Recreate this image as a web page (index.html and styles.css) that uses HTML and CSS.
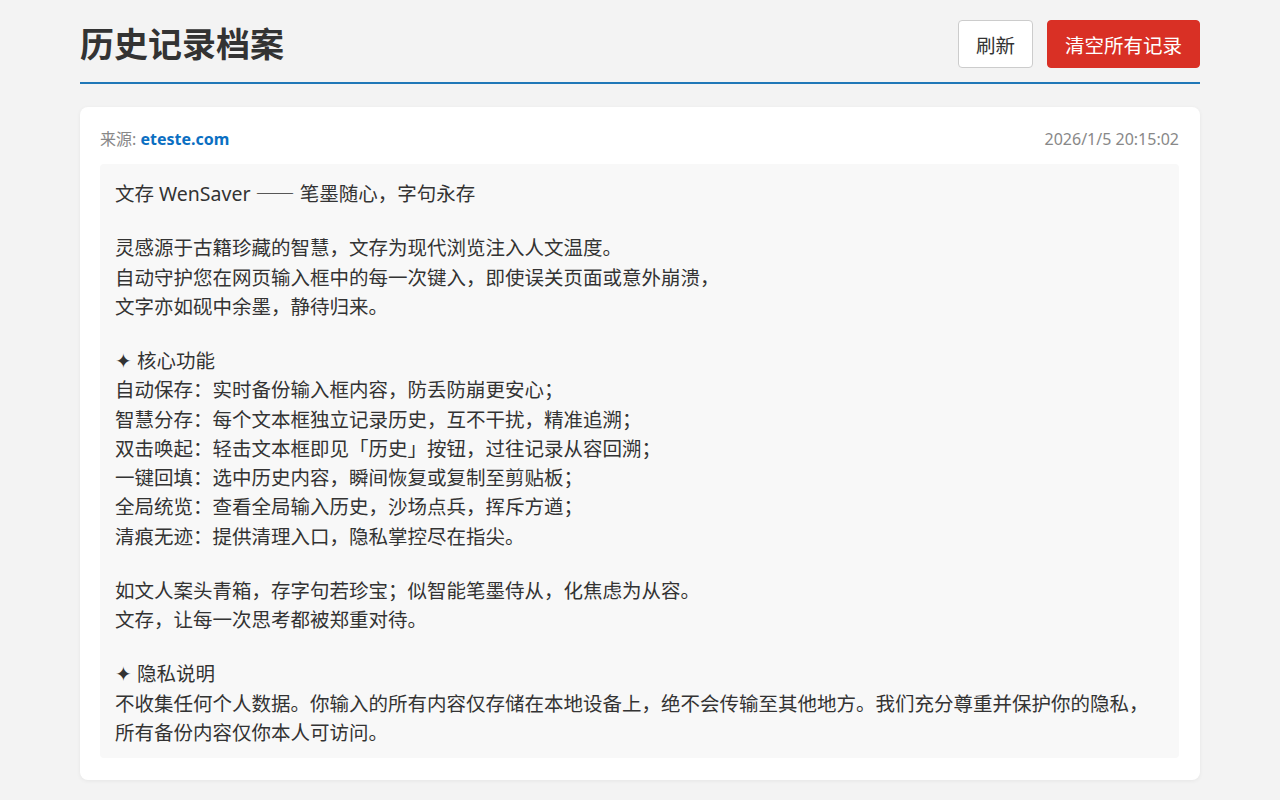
FILE: index.html
```html
<!DOCTYPE html>
<html lang="zh-CN">
<head>
    <meta charset="UTF-8">
    <meta name="viewport" content="width=device-width, initial-scale=1.0">
    <title>历史记录档案</title>
    <link rel="stylesheet" href="styles.css">
</head>
<body>

<div class="container">
    <div class="header">
        <h1>历史记录档案</h1>
        <div class="actions">
            <button class="button">刷新</button>
            <button class="button danger">清空所有记录</button>
        </div>
    </div>

    <!-- 记录列表 -->
    <div class="record">
        <div class="record-meta">
            <span>来源: <a class="source" href="#">eteste.com</a></span>
            <span>2026/1/5 20:15:02</span>
        </div>
        <div class="record-content">
            <p>文存 WenSaver <span class="dash">——</span> 笔墨随心，字句永存</p>
            <p>灵感源于古籍珍藏的智慧，文存为现代浏览注入人文温度。<br>自动守护您在网页输入框中的每一次键入，即使误关页面或意外崩溃，<br>文字亦如砚中余墨，静待归来。</p>
            <p>✦ 核心功能<br>自动保存：实时备份输入框内容，防丢防崩更安心；<br>智慧分存：每个文本框独立记录历史，互不干扰，精准追溯；<br>双击唤起：轻击文本框即见「历史」按钮，过往记录从容回溯；<br>一键回填：选中历史内容，瞬间恢复或复制至剪贴板；<br>全局统览：查看全局输入历史，沙场点兵，挥斥方遒；<br>清痕无迹：提供清理入口，隐私掌控尽在指尖。</p>
            <p>如文人案头青箱，存字句若珍宝；似智能笔墨侍从，化焦虑为从容。<br>文存，让每一次思考都被郑重对待。</p>
            <p>✦ 隐私说明<br>不收集任何个人数据。你输入的所有内容仅存储在本地设备上，绝不会传输至其他地方。我们充分尊重并保护你的隐私，所有备份内容仅你本人可访问。</p>
        </div>
    </div>
</div>

</body>
</html>
```

FILE: styles.css
```css
body {
    font-family: "Noto Sans", "Noto Sans CJK SC", sans-serif;
    background-color: #f3f3f3;
    color: #333;
    margin: 0;
}
.container {
    max-width: 1120px;
    margin: 0 auto;
    padding: 20px 0;
}
.header {
    display: flex;
    justify-content: space-between;
    align-items: center;
    height: 48px;
    padding-bottom: 14px;
    border-bottom: 2px solid #1f77b7;
}
h1 {
    margin: 0;
    font-size: 34px;
    line-height: 48px;
    font-weight: bold;
    color: #333;
}
.actions {
    display: flex;
    gap: 14px;
}
.button {
    font-family: inherit;
    font-size: 19.5px;
    height: 48px;
    padding: 0 17px;
    border: 1px solid #ccc;
    border-radius: 4px;
    background-color: #fff;
    color: #333;
    cursor: pointer;
}
.button.danger {
    background-color: #d93025;
    border-color: #d93025;
    color: #fff;
}
.record {
    margin-top: 23px;
    background-color: #fff;
    border-radius: 8px;
    padding: 20px 21px 22px 20px;
    box-shadow: 0 1px 4px rgba(0, 0, 0, 0.06);
}
.record-meta {
    display: flex;
    justify-content: space-between;
    align-items: center;
    height: 24px;
    font-size: 16px;
    line-height: 22px;
    color: #888;
    margin-bottom: 13px;
}
.source {
    color: #0b6fc2;
    font-weight: bold;
    text-decoration: none;
}
.record-content {
    background-color: #f8f8f8;
    border-radius: 4px;
    padding: 14px 15px 11px;
    font-size: 19.5px;
    line-height: 1.5;
}
.record-content p {
    margin: 0 0 25px;
}
.record-content p:last-child {
    margin-bottom: 0;
}
.dash {
    font-family: "Noto Sans CJK SC", sans-serif;
}
```
